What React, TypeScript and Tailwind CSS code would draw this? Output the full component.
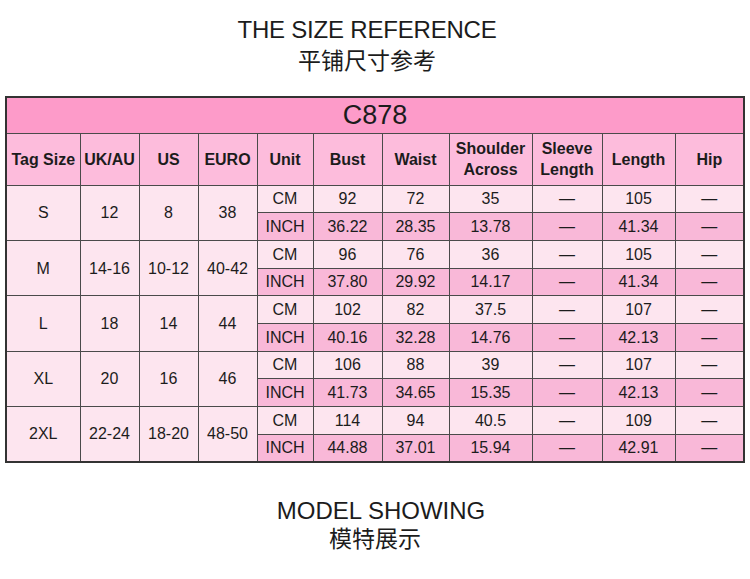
import { Fragment } from 'react';

const sizes = [
  {
    tag: 'S', uk: '12', us: '8', euro: '38',
    cm: ['92', '72', '35', '—', '105', '—'],
    inch: ['36.22', '28.35', '13.78', '—', '41.34', '—'],
  },
  {
    tag: 'M', uk: '14-16', us: '10-12', euro: '40-42',
    cm: ['96', '76', '36', '—', '105', '—'],
    inch: ['37.80', '29.92', '14.17', '—', '41.34', '—'],
  },
  {
    tag: 'L', uk: '18', us: '14', euro: '44',
    cm: ['102', '82', '37.5', '—', '107', '—'],
    inch: ['40.16', '32.28', '14.76', '—', '42.13', '—'],
  },
  {
    tag: 'XL', uk: '20', us: '16', euro: '46',
    cm: ['106', '88', '39', '—', '107', '—'],
    inch: ['41.73', '34.65', '15.35', '—', '42.13', '—'],
  },
  {
    tag: '2XL', uk: '22-24', us: '18-20', euro: '48-50',
    cm: ['114', '94', '40.5', '—', '109', '—'],
    inch: ['44.88', '37.01', '15.94', '—', '42.91', '—'],
  },
];

const headers = ['Tag Size', 'UK/AU', 'US', 'EURO', 'Unit', 'Bust', 'Waist', 'Shoulder\nAcross', 'Sleeve\nLength', 'Length', 'Hip'];

const font = "font-['Liberation_Sans','Noto_Sans_CJK_SC',sans-serif]";
const cell = 'border border-[#4a4a4a] p-0 text-center align-middle';

export default function App() {
  return (
    <div className={`w-[750px] h-[579px] bg-white text-[#1c1c1c] ${font}`}>
      {/* Top title */}
      <div className="flex flex-col items-center pt-[16px] pr-[16px]">
        <div className="text-[24px] leading-[28px] tracking-[-0.2px]">THE SIZE REFERENCE</div>
        <div className="text-[23px] leading-[28px] mt-[3px]">平铺尺寸参考</div>
      </div>

      {/* Size table */}
      <div className="pl-[5px] mt-[21px]">
        <table className="table-fixed border-collapse border-2 border-[#333] w-[738px] text-[16px] leading-[19px]">
          <colgroup>
            <col className="w-[74px]" />
            <col className="w-[59px]" />
            <col className="w-[59px]" />
            <col className="w-[59px]" />
            <col className="w-[56px]" />
            <col className="w-[69px]" />
            <col className="w-[67px]" />
            <col className="w-[83px]" />
            <col className="w-[70px]" />
            <col className="w-[73px]" />
            <col className="w-[69px]" />
          </colgroup>
          <tbody>
            <tr className="h-[36px] bg-[#fd9bc9]">
              <td colSpan={11} className={`${cell} text-[27px]`}>C878</td>
            </tr>
            <tr className="h-[52px] bg-[#fdbcdc]">
              {headers.map((h) => (
                <td key={h} className={`${cell} font-bold whitespace-pre-line leading-[21px]`}>
                  {h}
                </td>
              ))}
            </tr>
            {sizes.map((s) => (
              <Fragment key={s.tag}>
                <tr className="h-[27.7px] bg-[#fde5ef]">
                  <td rowSpan={2} className={cell}>{s.tag}</td>
                  <td rowSpan={2} className={cell}>{s.uk}</td>
                  <td rowSpan={2} className={cell}>{s.us}</td>
                  <td rowSpan={2} className={cell}>{s.euro}</td>
                  <td className={cell}>CM</td>
                  {s.cm.map((v, i) => (
                    <td key={i} className={cell}>{v}</td>
                  ))}
                </tr>
                <tr className="h-[27.7px] bg-[#f9b8d8]">
                  <td className={cell}>INCH</td>
                  {s.inch.map((v, i) => (
                    <td key={i} className={cell}>{v}</td>
                  ))}
                </tr>
              </Fragment>
            ))}
          </tbody>
        </table>
      </div>

      {/* Bottom title */}
      <div className="flex flex-col items-center mt-[34px]">
        <div className="text-[24px] leading-[28px] pl-[12px]">MODEL SHOWING</div>
        <div className="text-[23px] leading-[28px]">模特展示</div>
      </div>
    </div>
  );
}
